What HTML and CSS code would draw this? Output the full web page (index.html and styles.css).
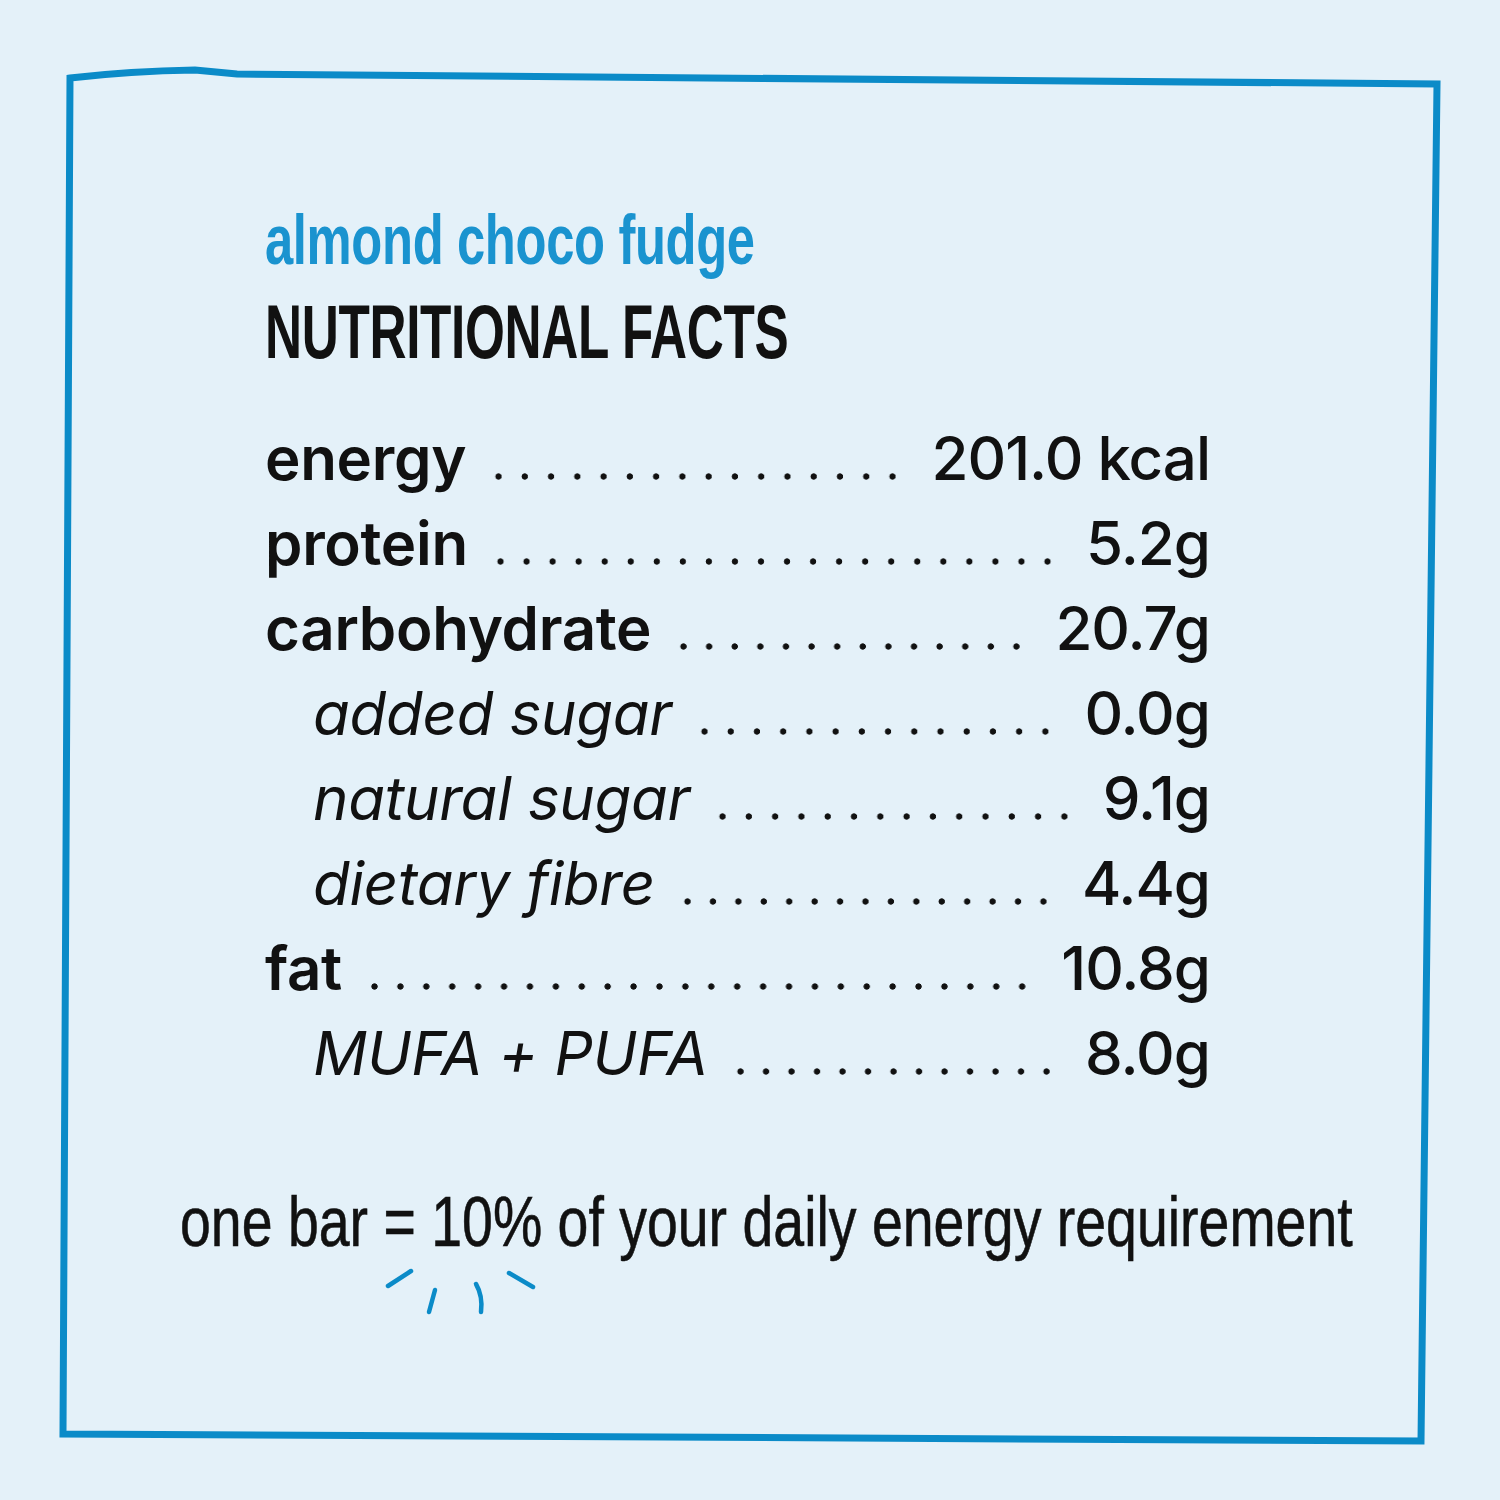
FILE: index.html
```html
<!DOCTYPE html>
<html lang="en">
<head>
<meta charset="utf-8">
<title>almond choco fudge – nutritional facts</title>
<link rel="stylesheet" href="styles.css">
</head>
<body>
<main class="card">
  <svg class="frame" width="1500" height="1500" viewBox="0 0 1500 1500" aria-hidden="true">
    <path d="M70 78 Q130 71 195 70 L237 74 L1437 84 L1421 1441 L63 1434 Z" fill="none" stroke="#0b8bc8" stroke-width="7" stroke-linejoin="miter"/>
  </svg>

  <header class="heading">
    <h2 class="flavour"><span class="squeeze squeeze-flavour">almond choco fudge</span></h2>
    <h1 class="title"><span class="squeeze squeeze-title">NUTRITIONAL FACTS</span></h1>
  </header>

  <ul class="facts">
    <li class="row"><span class="label">energy</span><span class="leader"></span><span class="value">201.0 kcal</span></li>
    <li class="row"><span class="label">protein</span><span class="leader"></span><span class="value">5.2g</span></li>
    <li class="row"><span class="label">carbohydrate</span><span class="leader"></span><span class="value">20.7g</span></li>
    <li class="row sub"><span class="label">added sugar</span><span class="leader"></span><span class="value">0.0g</span></li>
    <li class="row sub"><span class="label">natural sugar</span><span class="leader"></span><span class="value">9.1g</span></li>
    <li class="row sub"><span class="label">dietary fibre</span><span class="leader"></span><span class="value">4.4g</span></li>
    <li class="row"><span class="label">fat</span><span class="leader"></span><span class="value">10.8g</span></li>
    <li class="row sub"><span class="label">MUFA + PUFA</span><span class="leader"></span><span class="value">8.0g</span></li>
  </ul>

  <div class="footnote">
    <p class="footnote-text"><span class="squeeze squeeze-foot">one bar = 10% of your daily energy requirement</span></p>
    <svg class="rays" width="160" height="56" viewBox="0 0 160 56" aria-hidden="true">
      <g fill="none" stroke="#0b8bc8" stroke-width="4.5" stroke-linecap="round">
        <path d="M4 20 L27 5"/>
        <path d="M45 46 L51 24"/>
        <path d="M92 18 Q99 30 97 46"/>
        <path d="M125 7 L149 21"/>
      </g>
    </svg>
  </div>
</main>
</body>
</html>
```

FILE: styles.css
```css
html, body {
  margin: 0;
  padding: 0;
  background: #e4f1f9;
  overflow: hidden;
}

.card {
  position: relative;
  width: 1500px;
  height: 1500px;
  box-sizing: border-box;
  padding-top: 200px;
  color: #111;
  overflow: hidden;
}

.frame {
  position: absolute;
  top: 0;
  left: 0;
  pointer-events: none;
}

.heading {
  padding-left: 265px;
}

.squeeze {
  display: inline-block;
  transform-origin: 0 50%;
  white-space: nowrap;
}

.flavour {
  margin: 0;
  font-family: "Liberation Sans", Arial, sans-serif;
  font-weight: 700;
  font-size: 70px;
  line-height: 80px;
  color: #1a93cf;
  letter-spacing: -0.5px;
}

.squeeze-flavour {
  transform: scaleX(0.725);
}

.title {
  margin: 12px 0 0;
  font-family: "Liberation Sans", Arial, sans-serif;
  font-weight: 700;
  font-size: 76px;
  line-height: 80px;
  color: #111;
  letter-spacing: -0.5px;
}

.squeeze-title {
  transform: scaleX(0.675);
}

.facts {
  list-style: none;
  margin: 44px 0 0;
  padding: 0 0 0 265px;
  width: 945px;
  font-family: Inter, "DejaVu Sans", sans-serif;
  font-size: 60px;
  line-height: 85px;
}

.row {
  display: flex;
  align-items: baseline;
}

.label {
  font-weight: 600;
  letter-spacing: -0.3px;
}

.row.sub {
  padding-left: 48px;
}

.row.sub .label {
  font-weight: 400;
  font-style: italic;
}

.leader {
  flex: 1;
  height: 7px;
  margin: 0 26px 0 20px;
  background-image: radial-gradient(circle, #111 2.8px, rgba(17,17,17,0) 3.5px);
  background-size: 25px 7px;
  background-repeat: space no-repeat;
}

.value {
  font-weight: 500;
  letter-spacing: -1px;
}

.footnote {
  position: relative;
  margin-top: 86px;
  padding-left: 180px;
}

.footnote-text {
  margin: 0;
  font-family: "Liberation Sans", Arial, sans-serif;
  font-size: 70px;
  line-height: 80px;
  color: #111;
  -webkit-text-stroke: 0.6px #111;
  overflow: hidden;
}

.squeeze-foot {
  transform: scaleX(0.792);
}

.rays {
  position: absolute;
  left: 384px;
  top: 84px;
}
```
